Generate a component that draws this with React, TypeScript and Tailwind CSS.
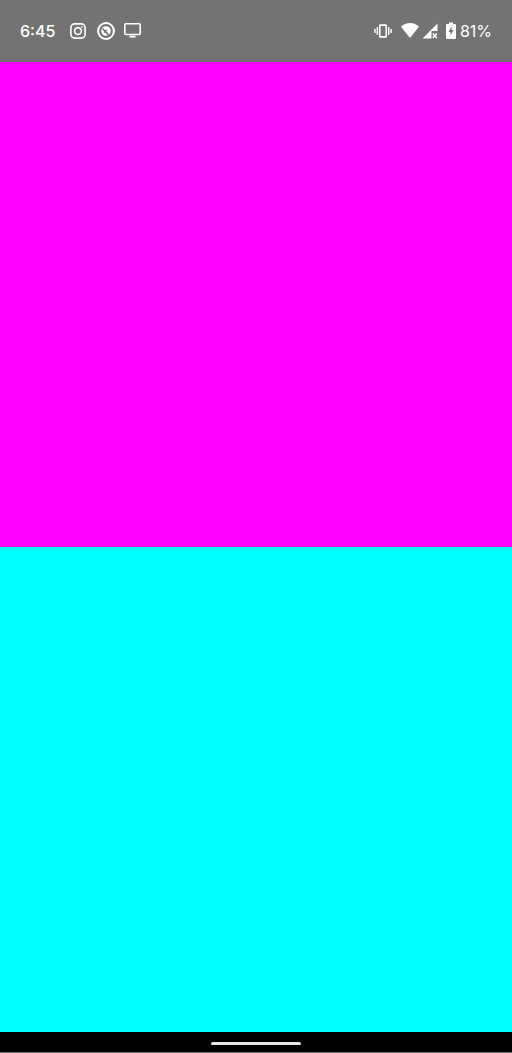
export default function App() {
  return (
    <div className="flex h-[1053px] w-[512px] flex-col overflow-hidden bg-[#737373]" style={{ fontFamily: "Inter, sans-serif" }}>
      <header className="flex h-[62px] items-center justify-between bg-[#737373] pb-[1px] pl-[20px] pr-[20px] text-white">
        <div className="flex items-center">
          <span className="w-[35px] text-[16px] font-medium leading-none">6:45</span>
          <svg className="ml-[15px]" width="16" height="16" viewBox="0 0 16 16" fill="none" stroke="white" strokeWidth="1.6">
            <rect x="0.9" y="0.9" width="14.2" height="14.2" rx="3.8" />
            <circle cx="8" cy="8" r="3.4" />
            <circle cx="12" cy="4" r="0.6" fill="white" strokeWidth="0.5" />
          </svg>
          <svg className="ml-[11px]" width="18" height="18" viewBox="0 0 18 18" fill="none">
            <circle cx="9" cy="9" r="7.9" stroke="white" strokeWidth="2" />
            <circle cx="9" cy="9" r="4.8" fill="white" />
            <path d="M5.5 6.5 L12 13.5" stroke="#737373" strokeWidth="1.6" />
            <path d="M7 10.5 L10 8" stroke="#737373" strokeWidth="1.3" />
          </svg>
          <svg className="ml-[9px]" width="17" height="15" viewBox="0 0 17 15" fill="none">
            <rect x="0.8" y="0.8" width="15.4" height="10.7" rx="1" stroke="white" strokeWidth="1.6" />
            <path d="M5.5 13.6 H11.5" stroke="white" strokeWidth="2" />
          </svg>
        </div>
        <div className="flex items-center">
          <svg width="18" height="14" viewBox="0 0 18 14" fill="white">
            <path d="M5 1.5 a1.2 1.2 0 0 1 1.2-1.2 h5.6 a1.2 1.2 0 0 1 1.2 1.2 v11 a1.2 1.2 0 0 1-1.2 1.2 h-5.6 a1.2 1.2 0 0 1-1.2-1.2 Z M6.6 2 v10 h4.8 V2 Z" fillRule="evenodd" />
            <rect x="2.6" y="3.2" width="1.5" height="7.6" />
            <rect x="13.9" y="3.2" width="1.5" height="7.6" />
            <rect x="0.2" y="5" width="1.5" height="4" />
            <rect x="16.3" y="5" width="1.5" height="4" />
          </svg>
          <svg className="ml-[9px]" width="18" height="15" viewBox="0 0 18 15" fill="white">
            <path d="M0 3.8 C2.2 1.5 5.4 0 9 0 s6.8 1.5 9 3.8 L9 15 Z" />
          </svg>
          <svg className="ml-[3px]" width="16" height="16" viewBox="0 0 16 16" fill="white">
            <path d="M15.5 0.5 V8 H9.5 V15.5 H0.5 Z" />
            <path d="M10.8 10.5 L14.8 15 M14.8 10.5 L10.8 15" stroke="white" strokeWidth="1.5" />
          </svg>
          <svg className="ml-[8px]" width="10" height="17" viewBox="0 0 10 17" fill="none">
            <path fillRule="evenodd" d="M3 0.5 H7 V2 H9 a1 1 0 0 1 1 1 V16 a1 1 0 0 1-1 1 H1 a1 1 0 0 1-1-1 V3 a1 1 0 0 1 1-1 H3 Z M5.7 4.5 L2.5 10 H4.5 V13.5 L7.6 8 H5.6 Z" fill="white" />
          </svg>
          <span className="ml-[4px] text-[16px] font-normal leading-none">81%</span>
        </div>
      </header>
      <div className="h-[485px] bg-[#ff00ff]" />
      <div className="h-[485px] bg-[#00ffff]" />
      <footer className="flex h-[20px] items-center justify-center bg-black pt-[2px]">
        <div className="h-[3px] w-[90px] rounded-full bg-[#e5e5e5]" />
      </footer>
      <div className="h-[1px] bg-[#737373]" />
    </div>
  );
}
